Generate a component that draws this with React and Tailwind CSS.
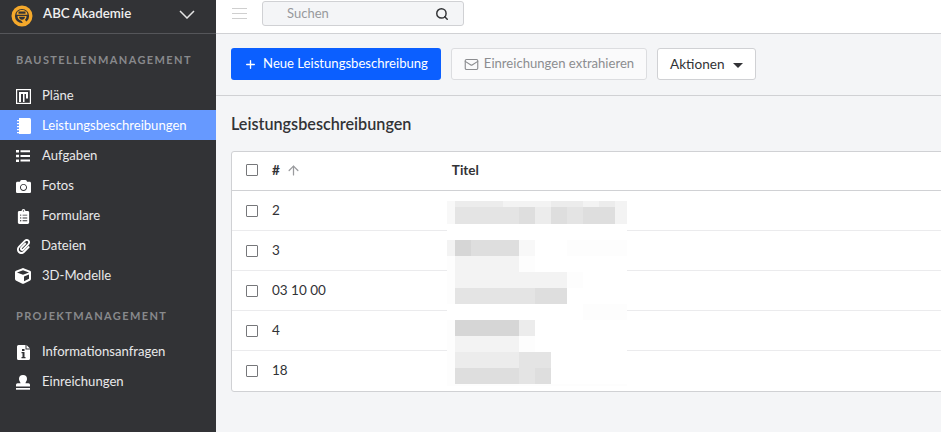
import React from "react";
import { Plus, Mail, Search, ArrowUp } from "lucide-react";
import { FaCamera, FaClipboardList, FaPaperclip, FaCube } from "react-icons/fa";

const PlanIcon = () => (
  <svg width="15" height="15" viewBox="0 0 15 15">
    <rect width="15" height="15" fill="#fff" />
    <rect x="1.200" y="1.200" width="12.600" height="12.600" fill="#323336" />
    <path d="M3 3h9v6.500h-2V5H8.500v8H7V5H5v8H3z" fill="#fff" />
  </svg>
);

const NotebookIcon = () => (
  <svg width="15" height="16" viewBox="0 0 15 16">
    <path d="M3 0h10.500A1.500 1.500 0 0 1 15 1.500v13a1.500 1.500 0 0 1-1.500 1.500H3z" fill="#fff" />
    <path d="M1 2h3v1.200H1zM1 5h3v1.200H1zM1 8h3v1.200H1zM1 11h3v1.200H1zM1 14h3v1.200H1z" fill="#fff" />
  </svg>
);

const ListIcon = () => (
  <svg width="14" height="12" viewBox="0 0 14 12">
    <path d="M0 0h3v2.500H0zM0 4.700h3v2.500H0zM0 9.400h3v2.500H0z" fill="#fff" />
    <path d="M4.500 .2H14v2H4.500zM4.500 4.900H14v2H4.500zM4.500 9.600H14v2H4.500z" fill="#fff" />
  </svg>
);

const InfoDocIcon = () => (
  <svg width="13" height="15" viewBox="0 0 13 15">
    <path d="M1.500 0H8.500v4.500H13v9a1.500 1.500 0 0 1-1.500 1.500h-10A1.500 1.500 0 0 1 0 13.500v-12A1.500 1.500 0 0 1 1.500 0z" fill="#fff" />
    <path d="M9.500 0L13 3.500H9.500z" fill="#fff" />
    <rect x="5" y="4" width="2.500" height="2" fill="#323336" />
    <path d="M4.500 7h3v5h1v1.200h-4V12h1V8.200h-1z" fill="#323336" />
  </svg>
);

const StampIcon = () => (
  <svg width="14" height="15" viewBox="0 0 14 15">
    <path d="M7 0a4 4 0 0 1 4 4c0 1.800-1.200 2.500-1.500 4.200h3A1.500 1.500 0 0 1 14 9.700V11.500H0V9.700a1.500 1.500 0 0 1 1.500-1.500h3C4.200 6.500 3 5.800 3 4a4 4 0 0 1 4-4z" fill="#fff" />
    <rect x="0" y="13" width="14" height="1.700" fill="#fff" />
  </svg>
);

const Logo = () => (
  <svg width="22" height="22" viewBox="0 0 22 22">
    <circle cx="11" cy="11" r="8.800" fill="#323336" stroke="#f5a92b" strokeWidth="3.400" />
    <path d="M5.500 9.800C5.500 6.500 8 5 11 5s5.500 1.500 5.500 4.800z" fill="#f5a92b" />
    <rect x="7.500" y="6.500" width="7" height="2.200" fill="#323336" />
    <path d="M6.500 11h9c0 1.800-.6 3-1.500 3.800l1.500 2.200-2.800 2-2.400-3.300C8 15 6.500 13.500 6.500 11z" fill="#f5a92b" />
    <path d="M8 11.800h6c0 1.500-1 3-3 3s-3-1.500-3-3z" fill="#323336" />
  </svg>
);

const siteItems = [
  { label: "Pläne", icon: <PlanIcon /> },
  { label: "Leistungsbeschreibungen", icon: <NotebookIcon />, active: true },
  { label: "Aufgaben", icon: <ListIcon /> },
  { label: "Fotos", icon: <FaCamera size={15} /> },
  { label: "Formulare", icon: <FaClipboardList size={15} /> },
  { label: "Dateien", icon: <FaPaperclip size={15} />, tight: true },
  { label: "3D-Modelle", icon: <FaCube size={16} /> },
];

const projectItems = [
  { label: "Informationsanfragen", icon: <InfoDocIcon /> },
  { label: "Einreichungen", icon: <StampIcon /> },
];

const rows = ["2", "3", "03 10 00", "4", "18"];

// pixelated title column, shades per cell
const shades = {
  a: "bg-[#fdfdfd]",
  b: "bg-[#f3f3f3]",
  c: "bg-[#ececec]",
  d: "bg-[#e4e4e4]",
  e: "bg-[#dedede]",
  f: "bg-[#d6d6d6]",
  g: "bg-[#f8f8f8]",
  w: "bg-white",
};

const mosaic = [
  { h: "h-[6px]", cells: "gcccbbbccbcb" },
  { h: "h-[17px]", cells: "gddddecedeeb" },
  { h: "h-[16px]", cells: "wwwwwwwwwwww" },
  { h: "h-[16px]", cells: "bfeeegwwaaaa" },
  { h: "h-[16px]", cells: "abbbbawwwwww" },
  { h: "h-[16px]", cells: "abbbbbbbawww" },
  { h: "h-[16px]", cells: "adddddeewwww" },
  { h: "h-[16px]", cells: "wwwwwwwwwaaa" },
  { h: "h-[16px]", cells: "affffcwwwwww" },
  { h: "h-[16px]", cells: "abbbbawwwwww" },
  { h: "h-[16px]", cells: "accccddwwwww" },
  { h: "h-[16px]", cells: "aeeeedewwwww" },
  { h: "h-[2px]", cells: "aaaaaaaaaaaa" },
];

const NavItem = ({ item }) => (
  <div
    className={`flex h-[30px] items-center pl-[15px] pt-[2px] text-[13.100px] text-[#e9e9ea] ${
      item.active ? "bg-[#6699ff] text-white" : ""
    }`}
  >
    <span className={`flex h-4 w-4 items-center justify-center text-white ${item.tight ? "mr-[10px]" : "mr-[11px]"}`}>
      {item.icon}
    </span>
    {item.label}
  </div>
);

const Checkbox = () => (
  <span className="block h-3 w-3 rounded-[1px] border border-[#76777a] bg-white" />
);

const App = () => {
  return (
    <div className="flex h-screen overflow-hidden bg-[#f4f5f7] font-['Lato',sans-serif]">
      <aside className="w-[216px] shrink-0 bg-[#323336]">
        <div className="flex h-[34px] items-center border-b border-[#55565a] pb-px pl-[11px] pr-[21px] text-white">
          <Logo />
          <span className="ml-[10px] flex-1 pb-[4px] text-[13.300px] font-semibold text-[#f0f0f0]">ABC Akademie</span>
          <svg width="16" height="9" viewBox="0 0 16 9" className="mb-[4px]">
            <path d="M1 1l7 7 7-7" fill="none" stroke="#e5e5e5" strokeWidth="1.500" />
          </svg>
        </div>
        <div className="pl-4 pt-[19px] text-[11px] font-bold leading-[14px] tracking-[1.400px] text-[#88898c]">
          BAUSTELLENMANAGEMENT
        </div>
        <nav className="mt-[13px]">
          {siteItems.map((item) => (
            <NavItem key={item.label} item={item} />
          ))}
        </nav>
        <div className="pl-4 pt-[19px] text-[11px] font-bold leading-[14px] tracking-[1.400px] text-[#88898c]">
          PROJEKTMANAGEMENT
        </div>
        <nav className="mt-[13px]">
          {projectItems.map((item) => (
            <NavItem key={item.label} item={item} />
          ))}
        </nav>
      </aside>

      <main className="min-w-0 flex-1">
        <div className="flex h-[34px] items-start border-b border-[#d0d1d4] bg-white pl-4">
          <div className="mt-[8px] flex w-[15px] flex-col gap-[4px]">
            <span className="h-px bg-[#cfcfcf]" />
            <span className="h-px bg-[#cfcfcf]" />
            <span className="h-px bg-[#cfcfcf]" />
          </div>
          <div className="ml-[15px] mt-px flex h-[25px] w-[202px] items-center justify-between rounded-[3px] border border-[#d0d1d4] bg-[#f4f5f7] pl-6 pr-[14px] text-[13px] text-[#98999c]">
            Suchen
            <Search size={14} strokeWidth={2.500} className="text-[#323336]" />
          </div>
        </div>

        <div className="flex h-[62px] items-start gap-[10px] border-b border-[#d0d1d4] pl-[15px] pt-[14px]">
          <button className="flex h-8 w-[210px] items-center justify-center gap-[6px] rounded-[3px] bg-[#0b5fff] text-[13.100px] text-white">
            <Plus size={13} strokeWidth={2.500} />
            Neue Leistungsbeschreibung
          </button>
          <button className="flex h-8 w-[196px] items-center justify-center gap-[5px] rounded-[3px] border border-[#dcdde0] bg-[#fafafb] text-[13.100px] text-[#8c8d90]">
            <Mail size={15} strokeWidth={1.800} />
            Einreichungen extrahieren
          </button>
          <button className="flex h-8 w-[99px] items-center gap-2 rounded-[3px] border border-[#d0d1d4] bg-white pl-3 text-[13.600px] text-[#323336]">
            Aktionen
            <span className="mt-[2px] border-x-[5px] border-t-[5px] border-x-transparent border-t-[#323336]" />
          </button>
        </div>

        <div className="pl-[15px]">
          <h1 className="pt-[18px] text-[16.200px] font-semibold leading-[20px] text-[#323336]">Leistungsbeschreibungen</h1>
          <div className="relative -mr-2 mt-[17px] rounded-[3px] border border-[#d0d1d4] bg-white text-[13.500px] text-[#323336]">
            <div className="flex h-[39px] items-center border-b border-[#d0d1d4] pb-[2px] pl-[14px] font-bold">
              <Checkbox />
              <span className="ml-[14px]">#</span>
              <ArrowUp size={15} className="ml-[6px] text-[#9a9b9e]" />
              <span className="ml-[151px]">Titel</span>
            </div>
            {rows.map((row, i) => (
              <div
                key={row}
                className={`flex h-10 items-center pl-[14px] ${i < rows.length - 1 ? "border-b border-[#ebebed]" : "pb-px"}`}
              >
                <Checkbox />
                <span className="ml-[14px]">{row}</span>
              </div>
            ))}
            <div className="absolute left-[215px] top-[49px] w-[180px] bg-white">
              {mosaic.map((line, i) => (
                <div key={i} className={`grid grid-cols-[8px_repeat(10,16px)_12px] ${line.h}`}>
                  {line.cells.split("").map((c, j) => (
                    <span key={j} className={shades[c]} />
                  ))}
                </div>
              ))}
            </div>
          </div>
        </div>
      </main>
    </div>
  );
};

export default App;
